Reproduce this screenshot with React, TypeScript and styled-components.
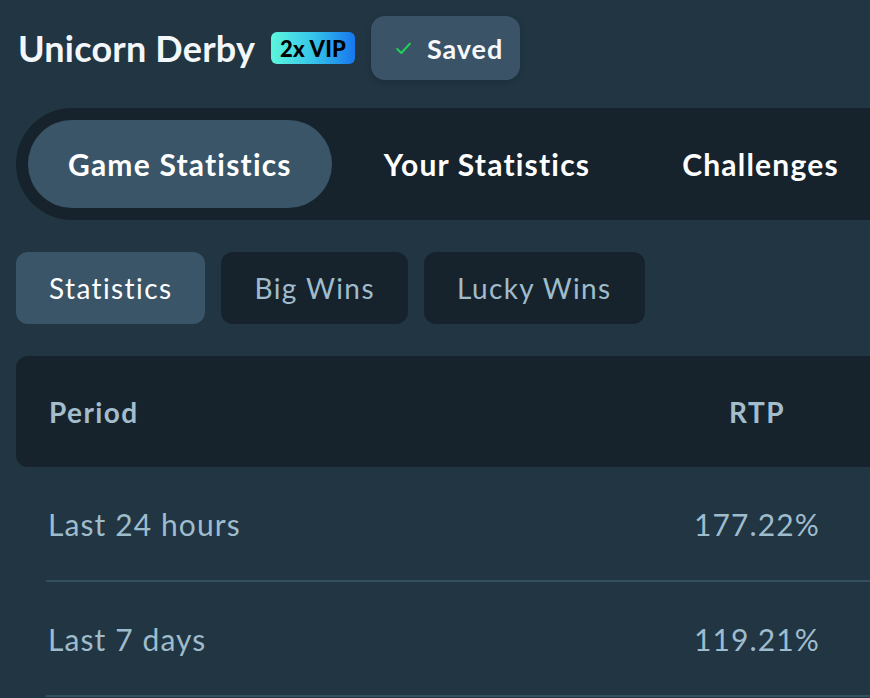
import React from "react";
import styled, { createGlobalStyle } from "styled-components";

const GlobalStyle = createGlobalStyle`
  html, body {
    margin: 0;
    padding: 0;
    background: #213543;
    overflow: hidden;
  }
  body {
    font-family: Lato, "Noto Sans", sans-serif;
  }
`;

const rows = [
  { period: "Last 24 hours", rtp: "177.22%" },
  { period: "Last 7 days", rtp: "119.21%" },
];

const App: React.FC = () => {
  return (
    <Page>
      <GlobalStyle />
      <Header>
        <Title>Unicorn Derby</Title>
        <Badge>2x VIP</Badge>
        <SavedButton>
          <svg width="15" height="13" viewBox="0 0 15 13" fill="none">
            <path d="M1.2 7 L5.3 11 L13.8 1.8" stroke="#1fd15a" strokeWidth="2" strokeLinecap="round" strokeLinejoin="round" />
          </svg>
          Saved
        </SavedButton>
      </Header>

      <MainTabs>
        <MainTab active>Game Statistics</MainTab>
        <MainTab>Your Statistics</MainTab>
        <MainTab>Challenges</MainTab>
      </MainTabs>

      <SubTabs>
        <SubTab active>Statistics</SubTab>
        <SubTab>Big Wins</SubTab>
        <SubTab>Lucky Wins</SubTab>
      </SubTabs>

      <Table>
        <HeadRow>
          <HeadCell>Period</HeadCell>
          <HeadCell center>RTP</HeadCell>
          <HeadCell />
        </HeadRow>
        {rows.map((r) => (
          <Row key={r.period}>
            <Cell>{r.period}</Cell>
            <Cell center>{r.rtp}</Cell>
            <Cell />
          </Row>
        ))}
      </Table>
    </Page>
  );
};

const Page = styled.div`
  width: 1120px;
  padding: 16px 0 0 16px;
  display: flex;
  flex-direction: column;
`;

const Header = styled.div`
  display: flex;
  align-items: center;
  gap: 16px;
  height: 64px;
`;

const Title = styled.h1`
  margin: 0 0 0 2px;
  font-size: 36px;
  font-weight: 700;
  color: #f4f7fa;
  letter-spacing: 0.2px;
`;

const Badge = styled.span`
  height: 32px;
  padding: 0 9px;
  display: flex;
  align-items: center;
  border-radius: 6px;
  background: linear-gradient(90deg, #5cf7de 0%, #36c4ea 50%, #1677ee 100%);
  color: #000000;
  font-size: 22px;
  font-weight: 900;
  letter-spacing: 0.2px;
`;

const SavedButton = styled.button`
  height: 64px;
  padding: 0 17px 0 25px;
  display: flex;
  align-items: center;
  gap: 16px;
  border: 0;
  border-radius: 14px;
  background: #3a5366;
  color: #f6f8fa;
  font-family: inherit;
  font-size: 27px;
  font-weight: 700;
  letter-spacing: 0.9px;
  box-shadow: 0 2px 6px rgba(0, 0, 0, 0.15);
`;

const MainTabs = styled.div`
  margin-top: 28px;
  height: 112px;
  box-sizing: border-box;
  padding: 12px;
  display: flex;
  gap: 12px;
  background: #17232c;
  border-radius: 56px 0 0 56px;
`;

const MainTab = styled.div<{ active?: boolean }>`
  height: 88px;
  padding: 0 40px;
  display: flex;
  align-items: center;
  border-radius: 44px;
  background: ${(p) => (p.active ? "#3a5567" : "transparent")};
  color: #ffffff;
  font-size: 30px;
  font-weight: 700;
  letter-spacing: 1.2px;
  white-space: nowrap;
`;

const SubTabs = styled.div`
  margin-top: 32px;
  display: flex;
  gap: 16px;
`;

const SubTab = styled.div<{ active?: boolean }>`
  height: 72px;
  padding: 0 33px;
  display: flex;
  align-items: center;
  border-radius: 12px;
  background: ${(p) => (p.active ? "#3a5567" : "#17232c")};
  color: ${(p) => (p.active ? "#ffffff" : "#9fbccd")};
  font-size: 28px;
  font-weight: 400;
  letter-spacing: 1.4px;
`;

const Table = styled.div`
  margin-top: 32px;
  display: flex;
  flex-direction: column;
`;

const HeadRow = styled.div`
  height: 111px;
  padding: 0 30px 0 33px;
  display: grid;
  grid-template-columns: 608px 200px 1fr;
  align-items: center;
  background: #17232c;
  border-radius: 12px;
`;

const HeadCell = styled.div<{ center?: boolean }>`
  text-align: ${(p) => (p.center ? "center" : "left")};
  color: #a3bdcd;
  font-size: 28px;
  font-weight: 700;
  letter-spacing: 1.4px;
`;

const Row = styled.div`
  height: 113px;
  margin: 0 0 0 30px;
  padding-left: 2px;
  display: grid;
  grid-template-columns: 609px 200px 1fr;
  align-items: center;
  border-bottom: 2px solid #33505f;
`;

const Cell = styled.div<{ center?: boolean }>`
  text-align: ${(p) => (p.center ? "center" : "left")};
  color: #9fbccd;
  font-size: 30px;
  font-weight: 400;
  letter-spacing: 1.1px;
`;

export default App;
